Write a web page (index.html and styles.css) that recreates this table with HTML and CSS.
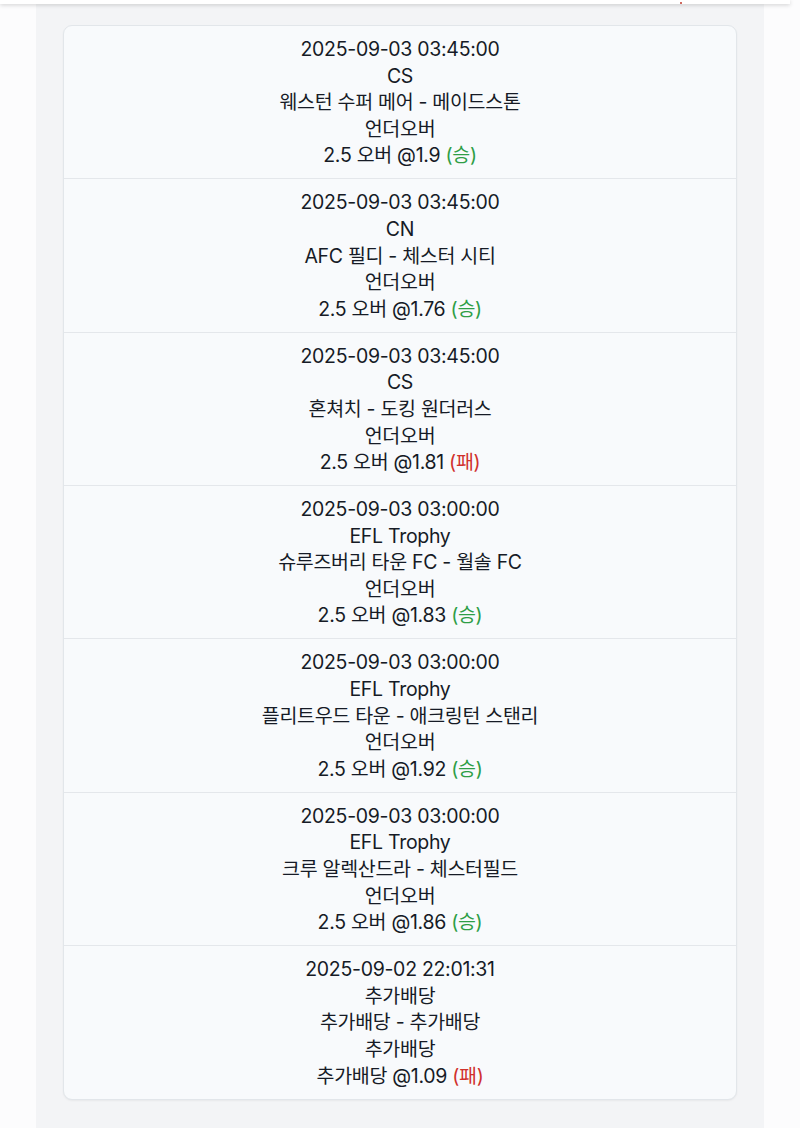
FILE: index.html
```html
<!DOCTYPE html>
<html lang="ko">
<head>
<meta charset="utf-8">
<link rel="stylesheet" href="styles.css">
</head>
<body>
<div class="topbar"><span class="dot"></span></div>
<main class="panel">
  <section class="card">
    <div class="row">
      <div>2025-09-03 03:45:00</div>
      <div>CS</div>
      <div>웨스턴 수퍼 메어 - 메이드스톤</div>
      <div>언더오버</div>
      <div>2.5 오버 @1.9 <span class="win">(승)</span></div>
    </div>
    <div class="row">
      <div>2025-09-03 03:45:00</div>
      <div>CN</div>
      <div>AFC 필디 - 체스터 시티</div>
      <div>언더오버</div>
      <div>2.5 오버 @1.76 <span class="win">(승)</span></div>
    </div>
    <div class="row">
      <div>2025-09-03 03:45:00</div>
      <div>CS</div>
      <div>혼쳐치 - 도킹 원더러스</div>
      <div>언더오버</div>
      <div>2.5 오버 @1.81 <span class="loss">(패)</span></div>
    </div>
    <div class="row">
      <div>2025-09-03 03:00:00</div>
      <div>EFL Trophy</div>
      <div>슈루즈버리 타운 FC - 월솔 FC</div>
      <div>언더오버</div>
      <div>2.5 오버 @1.83 <span class="win">(승)</span></div>
    </div>
    <div class="row">
      <div>2025-09-03 03:00:00</div>
      <div>EFL Trophy</div>
      <div>플리트우드 타운 - 애크링턴 스탠리</div>
      <div>언더오버</div>
      <div>2.5 오버 @1.92 <span class="win">(승)</span></div>
    </div>
    <div class="row">
      <div>2025-09-03 03:00:00</div>
      <div>EFL Trophy</div>
      <div>크루 알렉산드라 - 체스터필드</div>
      <div>언더오버</div>
      <div>2.5 오버 @1.86 <span class="win">(승)</span></div>
    </div>
    <div class="row">
      <div>2025-09-02 22:01:31</div>
      <div>추가배당</div>
      <div>추가배당 - 추가배당</div>
      <div>추가배당</div>
      <div>추가배당 @1.09 <span class="loss">(패)</span></div>
    </div>
  </section>
</main>
</body>
</html>
```

FILE: styles.css
```css
html, body {
  margin: 0;
  padding: 0;
  background: #fcfcfd;
}
body {
  font-family: Inter, "Noto Sans CJK KR", sans-serif;
  color: #161b26;
  height: 1128px;
  overflow: hidden;
}
.topbar {
  height: 4px;
  background: #ffffff;
  box-shadow: 0 1px 4px rgba(0, 0, 0, 0.18);
  margin-right: 10px;
  position: relative;
  z-index: 1;
}
.dot {
  position: absolute;
  left: 680px;
  top: 2px;
  width: 2px;
  height: 2px;
  background: #c0392b;
  border-radius: 1px;
}
.panel {
  margin: 0 36px;
  background: #f3f4f6;
  padding: 21px 27px 40px;
  min-height: 1100px;
}
.card {
  background: #f8fafc;
  border: 1.5px solid #e2e6ea;
  border-radius: 9px;
  box-shadow: 0 1px 2px rgba(0, 0, 0, 0.05);
}
.row {
  padding: 10px 8px 9.4px;
  text-align: center;
  font-size: 19.5px;
  line-height: 26.6px;
  letter-spacing: -0.3px;
}
.row + .row {
  border-top: 1px solid #e4e7eb;
}
.win {
  color: #2e9e46;
}
.loss {
  color: #d0312d;
}
```
